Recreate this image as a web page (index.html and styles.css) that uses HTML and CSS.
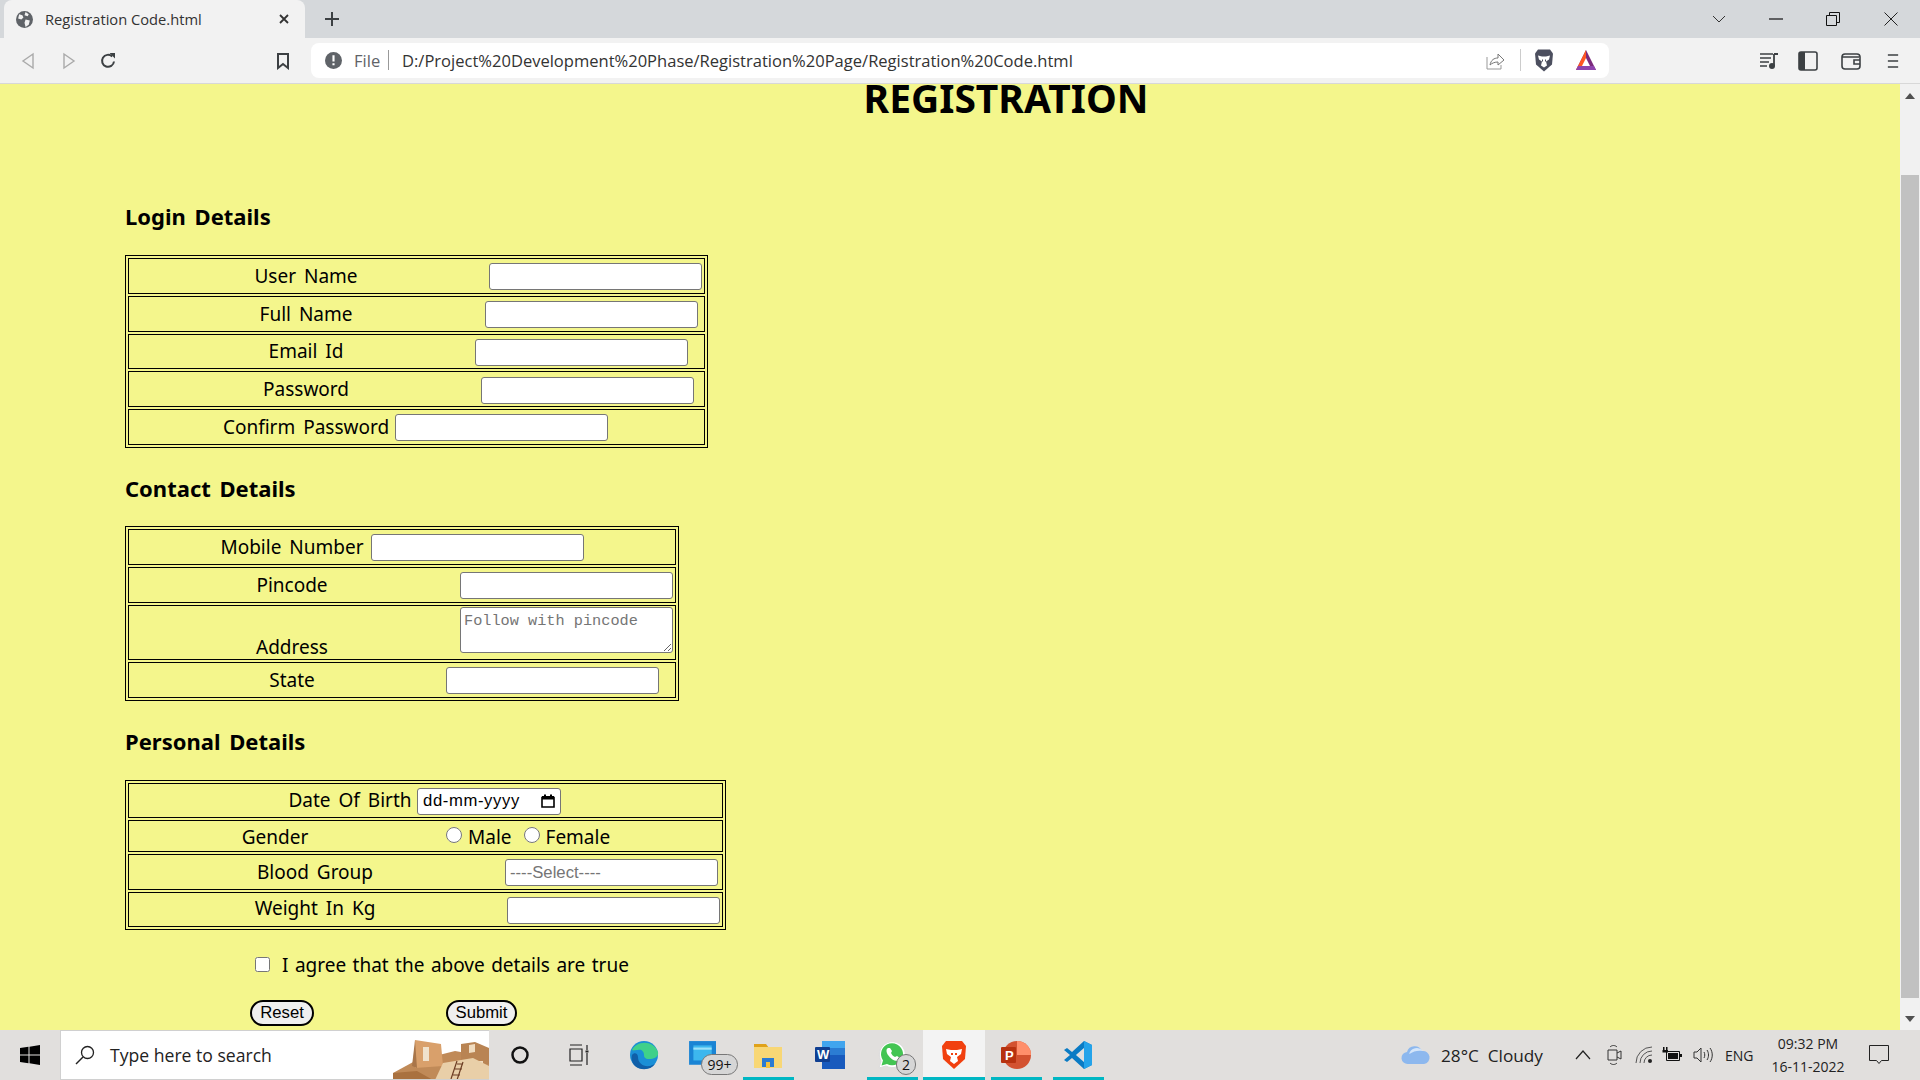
FILE: index.html
```html
<!DOCTYPE html>
<html lang="en">
  <head>
    <meta charset="UTF-8" />
    <title>Registration Code.html</title>
    <link rel="stylesheet" href="styles.css">
  </head>
  <body>
    <div class="tabstrip">
      <div class="tab">
        <svg class="globe" viewBox="0 0 16 16"><circle cx="8" cy="8" r="8" fill="#5f6368"/><path d="M3 3l3 1 1 2-2 2-3-1zM9 1l3 2-1 2-3-1zM9 8l4 1-1 4-3 2-1-4z" fill="#f2f2f2"/></svg>
        <span class="tab-title">Registration Code.html</span>
        <svg class="tab-close" viewBox="0 0 12 12"><path d="M2 2l8 8M10 2l-8 8" stroke="#333" stroke-width="1.8"/></svg>
      </div>
      <svg class="new-tab" viewBox="0 0 16 16"><path d="M8 1v14M1 8h14" stroke="#3c4043" stroke-width="2"/></svg>
      <div class="win-controls">
        <svg class="win-caret" viewBox="0 0 14 8"><path d="M1 1l6 6 6-6" fill="none" stroke="#333"/></svg>
        <svg class="win-min" viewBox="0 0 14 2"><path d="M0 1h14" stroke="#111" stroke-width="1.2"/></svg>
        <svg class="win-max" viewBox="0 0 14 14"><path d="M.5 3.500h10v10H.5zM3.500 3.500v-3h10v10h-3" fill="none" stroke="#111"/></svg>
        <svg class="win-close" viewBox="0 0 14 14"><path d="M.5.500l13 13M13.500.500l-13 13" stroke="#222"/></svg>
      </div>
    </div>

    <div class="toolbar">
      <svg class="nav-back" viewBox="0 0 14 18"><path d="M12 2v14L2 9z" fill="none" stroke="#aaa" stroke-width="1.4"/></svg>
      <svg class="nav-forward" viewBox="0 0 14 18"><path d="M2 2v14l10-7z" fill="none" stroke="#aaa" stroke-width="1.4"/></svg>
      <svg class="nav-reload" viewBox="0 0 18 18"><path d="M15 9.500A6 6 0 1 1 13.200 4.500" fill="none" stroke="#3c4043" stroke-width="2"/><path d="M10.500 1H16v5.500z" fill="#3c4043"/></svg>
      <svg class="nav-bookmark" viewBox="0 0 14 18"><path d="M2 2h10v14l-5-4-5 4z" fill="none" stroke="#3c4043" stroke-width="2"/></svg>
      <div class="address">
        <svg class="info" viewBox="0 0 16 16"><circle cx="8" cy="8" r="8" fill="#5f6368"/><path d="M7 3h2v6H7zM7 10.500h2v2H7z" fill="#fff"/></svg>
        <span class="scheme">File</span>
        <span class="address-sep"></span>
        <span class="url">D:/Project%20Development%20Phase/Registration%20Page/Registration%20Code.html</span>
        <svg class="share" viewBox="0 0 20 20"><path d="M1 7v12h14v-4" fill="none" stroke="#999"/><path d="M4 15c1-5 4-7 8-7V4l6 6-6 5v-3c-3 0-6 1-8 3z" fill="none" stroke="#777"/></svg>
        <span class="address-sep ext-sep"></span>
        <svg class="brave-shield" viewBox="0 0 20 24"><path d="M4 1h12l3 4-1 11-8 7-8-7L1 5z" fill="#4c4f5f"/><path d="M4 7l4 1h4l4-1-1 4-3 2 1 4-3 2-3-2 1-4-3-2z" fill="#fff"/><path d="M8 11h1v2H8zM11 11h1v2h-1z" fill="#4c4f5f"/></svg>
        <svg class="bat" viewBox="0 0 22 22"><path d="M11 1L1 21h20z" fill="#7b2a7d"/><path d="M11 1L1 21h6l4-10z" fill="#ff5722"/><path d="M1 21h20l-2-4H3z" fill="#8e44ad"/><path d="M11 9l-4 8h8z" fill="#fff"/></svg>
      </div>
      <svg class="tool-playlist" viewBox="0 0 20 18"><path d="M1 2h13M1 6h11M1 10h9M1 14h7" stroke="#3c4043" stroke-width="1.600"/><path d="M15 2h4M15 2v12" stroke="#3c4043" stroke-width="1.800"/><circle cx="13" cy="14" r="3" fill="#3c4043"/></svg>
      <svg class="tool-sidebar" viewBox="0 0 20 20"><rect x="1" y="1" width="18" height="18" rx="2" fill="none" stroke="#3c4043" stroke-width="1.600"/><rect x="1" y="1" width="6" height="18" fill="#3c4043"/></svg>
      <svg class="tool-wallet" viewBox="0 0 20 20"><rect x="1" y="3" width="18" height="15" rx="3" fill="none" stroke="#3c4043" stroke-width="1.600"/><path d="M1 6h17M19 9h-6v4h6" fill="none" stroke="#3c4043" stroke-width="1.600"/></svg>
      <svg class="tool-menu" viewBox="0 0 14 18"><path d="M1 2h12M1 9h12M1 16h12" stroke="#3c4043" stroke-width="2"/></svg>
    </div>

    <div class="viewport">
      <main class="page">
        <h1 class="page-title">REGISTRATION</h1>

        <h3 class="group-title login-title">Login Details</h3>
        <div class="group login">
          <div class="row"><label class="name">User Name</label><input class="field f-user" type="text"></div>
          <div class="row"><label class="name">Full Name</label><input class="field f-full" type="text"></div>
          <div class="row"><label class="name">Email Id</label><input class="field f-email" type="text"></div>
          <div class="row"><label class="name">Password</label><input class="field f-pass" type="password"></div>
          <div class="row"><label class="name">Confirm Password</label><input class="field f-confirm" type="password"></div>
        </div>

        <h3 class="group-title contact-title">Contact Details</h3>
        <div class="group contact">
          <div class="row"><label class="name">Mobile Number</label><input class="field f-mobile" type="text"></div>
          <div class="row"><label class="name">Pincode</label><input class="field f-pin" type="text"></div>
          <div class="row row-address"><label class="name">Address</label><textarea class="field f-address" placeholder="Follow with pincode"></textarea></div>
          <div class="row"><label class="name">State</label><input class="field f-state" type="text"></div>
        </div>

        <h3 class="group-title personal-title">Personal Details</h3>
        <div class="group personal">
          <div class="row row-dob">
            <label class="name l-dob">Date Of Birth</label>
            <div class="date-field">
              <span>dd-mm-yyyy</span>
              <svg class="calendar" viewBox="0 0 14 14"><path d="M1 3.500h12v9.500H1z" fill="none" stroke="#000" stroke-width="1.600"/><path d="M1 2h12v3.500H1zM3 .5h2v2H3zM9 .5h2v2H9z" fill="#000"/></svg>
            </div>
          </div>
          <div class="row row-gender">
            <label class="name l-gender">Gender</label>
            <input class="radio r-male" type="radio" name="gender"><span class="radio-text">Male</span>
            <input class="radio r-female" type="radio" name="gender"><span class="radio-text">Female</span>
          </div>
          <div class="row"><label class="name l-blood">Blood Group</label><input class="field f-blood" type="text" placeholder="----Select----"></div>
          <div class="row"><label class="name l-weight">Weight In Kg</label><input class="field f-weight" type="text"></div>
        </div>

        <div class="agree">
          <input class="agree-box" type="checkbox">
          <span>I agree that the above details are true</span>
        </div>

        <div class="actions">
          <button class="btn btn-reset" type="reset">Reset</button>
          <button class="btn btn-submit" type="submit">Submit</button>
        </div>
      </main>

      <div class="scrollbar">
        <span class="arrow-up"></span>
        <div class="thumb"></div>
        <span class="arrow-down"></span>
      </div>
    </div>

    <footer class="taskbar">
      <div class="start">
        <svg viewBox="0 0 20 20"><path d="M0 3l8.500-1.200v7.700H0zM9.500 1.700L20 0v9.500H9.500zM0 10.500h8.500v7.700L0 17zM9.500 10.500H20V20L9.500 18.300z" fill="#000"/></svg>
      </div>
      <div class="search">
        <svg class="search-icon" viewBox="0 0 20 20"><circle cx="12.500" cy="7.500" r="6" fill="none" stroke="#222" stroke-width="1.300"/><path d="M8 12l-7 7" stroke="#222" stroke-width="1.500"/></svg>
        <span class="search-text">Type here to search</span>
        <svg class="search-art" viewBox="0 0 96 45">
          <path d="M0 38l22-12 40-10 34 6v23H0z" fill="#c08a58"/>
          <path d="M22 5l26 4 2 22-28 2z" fill="#d9a06b"/>
          <path d="M22 5l-3 26 5 2z" fill="#a9764a"/>
          <path d="M68 9l14-2 14 6v16H68z" fill="#b98453"/>
          <path d="M30 12h6v14h-6z" fill="#f0e2cc"/>
          <path d="M76 10l6-1v8l-6 1zM84 26h6v12h-6z" fill="#f0dcc0"/>
          <path d="M50 28l30-5 16 8v14H42z" fill="#e9cfa8"/>
          <path d="M0 38l24-2 16 9H0z" fill="#a9713f"/>
          <path d="M58 44l6-18M64 45l6-18M60 40h7M62 34h7M64 29h6" stroke="#6b3b22" stroke-width="1.200"/>
        </svg>
      </div>
      <div class="task-btn">
        <svg class="i-cortana" viewBox="0 0 20 20"><circle cx="10" cy="10" r="7.500" fill="none" stroke="#111" stroke-width="2.500"/></svg>
      </div>
      <div class="task-btn">
        <svg class="i-taskview" viewBox="0 0 20 22"><path d="M1 1h12M1 21h12M1 5h12v12H1zM18 1v5M18 9v12" fill="none" stroke="#222" stroke-width="1.200"/><path d="M16.500 6.500h3v2h-3z" fill="#222"/></svg>
      </div>
      <div class="task-btn">
        <svg class="i-edge" viewBox="0 0 30 30"><circle cx="15" cy="15" r="14" fill="#1a8fd6"/><path d="M3 10C7 1 24-1 29 12c1 5-4 7-9 7-4 0-5-2-5-4 0-4-3-6-6-5-3 0-5 1-6 0z" fill="#3fd08a"/><path d="M9 17c0 6 5 10 12 9l5-2c-4 6-14 7-20 2-3-3-4-7-3-11 2-3 6-2 6 2z" fill="#0f5fa8"/></svg>
      </div>
      <div class="task-btn">
        <svg class="i-store" viewBox="0 0 26 26"><path d="M1 1h25v22H1z" fill="#1a84d4"/><path d="M5 5h17v14H5z" fill="#3db7ee"/><path d="M5 8h17" stroke="#9be2f8" stroke-width="2"/></svg>
        <span class="badge badge-wide">99+</span>
      </div>
      <div class="task-btn task-open">
        <svg class="i-folder" viewBox="0 0 28 26"><path d="M0 2h12l3 4H0z" fill="#e0a21a"/><path d="M0 5h28v21H0z" fill="#f8d775"/><path d="M8 25v-9h12v9h-4v-5h-4v5z" fill="#2a7bd3"/><path d="M12 20h4v6h-4z" fill="#f2c13d"/></svg>
      </div>
      <div class="task-btn">
        <svg class="i-word" viewBox="0 0 30 30"><path d="M7 1h23v28H7z" fill="#185abd"/><path d="M7 1h23v7H7z" fill="#41a5ee"/><path d="M7 8h23v7H7z" fill="#2b7cd3"/><rect x="0" y="7" width="15" height="15" rx="1" fill="#103f91"/><text x="2" y="19" class="word-letter">W</text></svg>
      </div>
      <div class="task-btn task-open">
        <svg class="i-whatsapp" viewBox="0 0 30 30"><path d="M2 28l2-7A13 13 0 1 1 9 26z" fill="#fff" stroke="#ddd"/><path d="M4.500 25.500l1.500-5A11 11 0 1 1 10 24z" fill="#43c553"/><path d="M11 8c-2 1-2 4 0 7s6 6 9 6c2 0 3-2 3-3l-3-2-2 1c-2-1-3-2-4-4l1-2-2-3z" fill="#fff"/></svg>
        <span class="badge">2</span>
      </div>
      <div class="task-btn task-open task-active">
        <svg class="i-brave" viewBox="0 0 26 30"><path d="M5 1h16l4 5-1 13-11 10L2 19 1 6z" fill="#f1400f"/><path d="M5 9l5 1h6l5-1-1 5-4 3 1 4-4 3-4-3 1-4-4-3z" fill="#fff"/><path d="M10 13h2v2h-2zM14 13h2v2h-2z" fill="#f1400f"/></svg>
      </div>
      <div class="task-btn task-open">
        <svg class="i-ppt" viewBox="0 0 30 30"><circle cx="16" cy="15" r="14" fill="#d35230"/><path d="M16 1a14 14 0 0 1 14 14H16z" fill="#ff8f6b"/><rect x="0" y="7" width="15" height="16" rx="1" fill="#b7320f"/><text x="4" y="20" class="ppt-letter">P</text></svg>
      </div>
      <div class="task-btn task-open">
        <svg class="i-code" viewBox="0 0 30 30"><path d="M21 1l8 4v20l-8 4L9 18l-5 4-3-2 6-5-6-5 3-2 5 4z" fill="#0a7bc4"/><path d="M21 1l8 4v20l-8 4zM21 8l-8 7 8 7z" fill="#23a3ea"/><path d="M21 8v14l-8-7z" fill="#e0e0e0"/></svg>
      </div>

      <div class="tray">
        <svg class="i-cloud" viewBox="0 0 30 20"><path d="M7 19a6 6 0 0 1-1-12 8 8 0 0 1 15-1 6.500 6.500 0 0 1 2 13z" fill="#8db8ee"/><path d="M8 9a8 8 0 0 1 14-3c-5-1-9 0-14 3z" fill="#d5e6fa"/></svg>
        <span class="weather">28°C&nbsp; Cloudy</span>
        <svg class="i-chevron" viewBox="0 0 16 10"><path d="M1 9l7-8 7 8" fill="none" stroke="#222" stroke-width="1.200"/></svg>
        <svg class="i-meet" viewBox="0 0 16 22"><path d="M1 6h9v10H1zM10 9l4-2v8l-4-2" fill="none" stroke="#333"/><path d="M3 3c2-2 5-2 7 0M3 19c2 2 5 2 7 0" fill="none" stroke="#333"/></svg>
        <svg class="i-wifi" viewBox="0 0 18 18"><path d="M1 17A16 16 0 0 1 17 1M5 17A12 12 0 0 1 17 5M9 17a8 8 0 0 1 8-8" fill="none" stroke="#555"/><circle cx="15" cy="15" r="2" fill="#222"/></svg>
        <svg class="i-battery" viewBox="0 0 20 16"><path d="M4.500 4.500h13v9h-13z" fill="none" stroke="#111"/><path d="M6 6h10v6H6zM18 7h2v3h-2zM1 0h1.500v4H1zM4 0h1.500v4H4zM.5 3h5.500v2.500H.5z" fill="#111"/></svg>
        <svg class="i-volume" viewBox="0 0 20 18"><path d="M1 6h3l4-4v14l-4-4H1z" fill="none" stroke="#333"/><path d="M11 6c1 2 1 4 0 6M14 4c2 3 2 7 0 10M17 2c3 4 3 10 0 14" fill="none" stroke="#333"/></svg>
        <span class="lang">ENG</span>
        <div class="clock"><span>09:32 PM</span><span>16-11-2022</span></div>
        <svg class="i-notify" viewBox="0 0 20 20"><path d="M.5.500h19v15h-7l-2.500 3-2.500-3h-7z" fill="none" stroke="#222"/></svg>
      </div>
    </footer>
  </body>
</html>
```

FILE: styles.css
```css
* {
  box-sizing: border-box;
}

html,
body {
  margin: 0;
  height: 100%;
}

body {
  width: 1920px;
  height: 1080px;
  overflow: hidden;
  display: flex;
  flex-direction: column;
  font-family: "Noto Sans", sans-serif;
  color: #000;
  background: #f4f68c;
}

svg {
  display: block;
  flex: none;
}

/* browser chrome */
.tabstrip {
  height: 38px;
  flex: none;
  background: #d5d8db;
  display: flex;
  align-items: flex-end;
  padding-left: 4px;
}

.tab {
  width: 301px;
  height: 38px;
  background: #f2f2f2;
  border-radius: 8px 8px 0 0;
  display: flex;
  align-items: center;
  padding-left: 12px;
  font-family: "Open Sans", sans-serif;
  font-size: 14.700px;
  color: #333;
}

.globe {
  width: 17px;
  height: 17px;
}

.tab-title {
  margin-left: 12px;
  width: 229px;
  white-space: nowrap;
}

.tab-close {
  width: 12px;
  height: 12px;
  margin-left: 4px;
}

.new-tab {
  width: 16px;
  height: 16px;
  margin: 0 0 11px 19px;
}

.win-controls {
  margin-left: auto;
  display: flex;
  align-items: center;
  height: 38px;
}

.win-caret {
  width: 14px;
  height: 8px;
  margin-right: 43px;
}

.win-min {
  width: 14px;
  height: 2px;
  margin-right: 43px;
}

.win-max {
  width: 14px;
  height: 14px;
  margin-right: 44px;
}

.win-close {
  width: 14px;
  height: 14px;
  margin-right: 22px;
}

.toolbar {
  height: 46px;
  flex: none;
  background: #f2f2f2;
  border-bottom: 1px solid #d8d8d8;
  display: flex;
  align-items: center;
  padding-left: 21px;
}

.nav-back,
.nav-forward {
  width: 14px;
  height: 18px;
}

.nav-forward {
  margin-left: 27px;
}

.nav-reload {
  width: 18px;
  height: 18px;
  margin-left: 23px;
}

.nav-bookmark {
  width: 14px;
  height: 18px;
  margin-left: 159px;
}

.address {
  width: 1298px;
  height: 35px;
  margin: -1px 0 0 21px;
  background: #fff;
  border-radius: 8px;
  display: flex;
  align-items: center;
  padding-left: 14px;
  font-family: "Open Sans", sans-serif;
  font-size: 16.550px;
  color: #444;
}

.info {
  width: 17px;
  height: 17px;
}

.scheme {
  margin-left: 12px;
  width: 34px;
  color: #5f6368;
}

.address-sep {
  width: 1px;
  height: 20px;
  background: #999;
}

.url {
  margin-left: 13px;
  width: 1081px;
  white-space: nowrap;
  color: #333;
}

.share {
  width: 20px;
  height: 20px;
  margin-left: 3px;
}

.ext-sep {
  margin-left: 14px;
  height: 22px;
  background: #ccc;
}

.brave-shield {
  width: 20px;
  height: 25px;
  margin-left: 13px;
}

.bat {
  width: 22px;
  height: 22px;
  margin-left: 21px;
}

.tool-playlist {
  width: 20px;
  height: 18px;
  margin-left: 150px;
}

.tool-sidebar {
  width: 20px;
  height: 20px;
  margin-left: 19px;
}

.tool-wallet {
  width: 20px;
  height: 20px;
  margin-left: 23px;
}

.tool-menu {
  width: 12px;
  height: 18px;
  margin-left: 26px;
}

/* page */
.viewport {
  flex: 1;
  min-height: 0;
  display: flex;
}

.page {
  flex: 1;
  padding-left: 125px;
}

.page-title {
  margin: 0;
  padding-right: 13px;
  font-size: 39px;
  line-height: 28px;
  text-align: center;
  font-weight: 700;
}

.group-title {
  margin: 0;
  font-size: 22px;
  line-height: 30px;
  font-weight: 700;
  word-spacing: 3px;
}

.login-title {
  margin-top: 89px;
}

.contact-title {
  margin-top: 25px;
}

.personal-title {
  margin-top: 25px;
}

.group {
  border: 1px solid #000;
  padding: 2px;
  display: flex;
  flex-direction: column;
  gap: 2px;
  margin-top: 23px;
  font-size: 19px;
  word-spacing: 3px;
}

.login {
  width: 583px;
  margin-top: 24px;
}

.contact {
  width: 554px;
}

.personal {
  width: 601px;
  margin-top: 24px;
}

.row {
  height: 35.750px;
  border: 1px solid #000;
  display: flex;
  align-items: center;
}

.contact .row {
  height: 36px;
}

.name {
  flex: none;
  text-align: center;
  white-space: nowrap;
}

.login .name {
  width: 170px;
  margin-left: 92px;
}

.contact .name {
  width: 150px;
  margin-left: 88px;
}

.field {
  flex: none;
  width: 213px;
  height: 27px;
  padding: 1px 4px;
  margin-top: 2px;
  border: 1px solid #767676;
  border-radius: 3px;
  background: #fff;
  font-family: "Liberation Sans", sans-serif;
  font-size: 16.700px;
}

.field::placeholder {
  color: #757575;
}

/* inputs don't share a column in this form, each one sits on its own */
.f-user {
  margin-left: 98px;
}

.f-full {
  margin-left: 94px;
}

.f-email {
  margin-left: 84px;
}

.f-pass {
  margin-left: 90px;
}

.f-confirm {
  margin-left: 4px;
}

.f-mobile {
  margin-left: 4px;
}

.f-pin {
  margin-left: 93px;
}

.f-state {
  margin-left: 79px;
}

.contact .row-address {
  height: 55px;
  align-items: flex-end;
}

.row-address .name {
  line-height: 24px;
}

.f-address {
  height: 46px;
  margin: 0 0 6px 93px;
  padding: 4px 3px;
  font-family: "Liberation Mono", monospace;
  font-size: 15.250px;
}

.row-dob {
  height: 35px;
}

.row-gender {
  height: 32px;
}

.l-dob {
  width: 130px;
  margin-left: 156px;
}

.date-field {
  width: 144px;
  height: 27px;
  margin: 2px 0 0 2px;
  border: 1px solid #767676;
  border-radius: 3px;
  background: #fff;
  display: flex;
  align-items: center;
  justify-content: space-between;
  padding: 0 5px 0 5px;
  font-family: "Liberation Sans", sans-serif;
  font-size: 16.700px;
  letter-spacing: 0.600px;
  word-spacing: 0;
}

.calendar {
  width: 14px;
  height: 14px;
}

.l-gender {
  width: 100px;
  margin-left: 96px;
  margin-top: 2px;
}

.radio {
  flex: none;
  width: 16px;
  height: 16px;
  margin: 0 0 2px;
}

.r-male {
  margin-left: 121px;
}

.r-female {
  margin-left: 0;
}

.radio-text {
  margin-left: 6px;
  margin-right: 12px;
  margin-top: 2px;
}

.l-blood,
.l-weight {
  width: 130px;
  margin-left: 121px;
}

.l-weight {
  margin-bottom: 3px;
}

.f-blood {
  margin-left: 125px;
}

.f-weight {
  margin-left: 127px;
}

.agree {
  margin: 20px 0 0 130px;
  height: 30px;
  display: flex;
  align-items: center;
  font-size: 19px;
  word-spacing: 1.500px;
}

.agree-box {
  width: 15px;
  height: 15px;
  margin: 0 12px 2px 0;
}

.actions {
  margin: 20px 0 0 125px;
  display: flex;
}

.btn {
  height: 26px;
  padding: 0;
  border: 2px solid #000;
  border-radius: 13px;
  background: #efefef;
  font-family: "Liberation Sans", sans-serif;
  font-size: 16.700px;
  line-height: 20px;
  color: #000;
}

.btn-reset {
  width: 64px;
}

.btn-submit {
  width: 71px;
  margin-left: 132px;
}

.scrollbar {
  width: 20px;
  flex: none;
  background: #f1f1f1;
  position: relative;
}

.thumb {
  position: absolute;
  top: 91px;
  left: 1px;
  width: 18px;
  height: 823px;
  background: #c1c1c1;
}

.arrow-up,
.arrow-down {
  position: absolute;
  left: 5px;
  width: 0;
  height: 0;
  border-left: 5px solid transparent;
  border-right: 5px solid transparent;
}

.arrow-up {
  top: 9px;
  border-bottom: 6px solid #505050;
}

.arrow-down {
  bottom: 8px;
  border-top: 6px solid #505050;
}

/* windows taskbar */
.taskbar {
  height: 50px;
  flex: none;
  background: #e1dfdd;
  display: flex;
  font-family: "Open Sans", sans-serif;
  color: #222;
}

.start {
  width: 60px;
  display: flex;
  align-items: center;
  justify-content: center;
}

.start svg {
  width: 20px;
  height: 20px;
}

.search {
  width: 429px;
  background: #fff;
  border: 1px solid #d0d0d0;
  border-width: 1px 0 1px 1px;
  display: flex;
  align-items: center;
  overflow: hidden;
  font-size: 17.600px;
}

.search-icon {
  width: 20px;
  height: 20px;
  margin-left: 14px;
}

.search-text {
  margin-left: 15px;
  width: 284px;
  white-space: nowrap;
}

.search-art {
  width: 96px;
  height: 45px;
  margin-top: 5px;
}

.task-btn {
  width: 62px;
  height: 50px;
  position: relative;
  display: flex;
  align-items: center;
  justify-content: center;
}

.task-open::after {
  content: "";
  position: absolute;
  left: 6px;
  right: 5px;
  bottom: 0;
  height: 3px;
  background: #00b7c3;
}

.task-active {
  background: #f3f3f3;
}

.task-active::after {
  left: 0;
  right: 0;
}

.i-cortana {
  width: 20px;
  height: 20px;
}

.i-taskview {
  width: 20px;
  height: 22px;
  margin-right: 6px;
}

.i-edge,
.i-word,
.i-whatsapp,
.i-ppt,
.i-code {
  width: 30px;
  height: 30px;
}

.i-store {
  width: 28px;
  height: 28px;
  margin: -3px 8px 0 0;
}

.i-folder {
  width: 28px;
  height: 26px;
}

.i-brave {
  width: 26px;
  height: 30px;
}

.word-letter,
.ppt-letter {
  font-family: "Liberation Sans", sans-serif;
  font-size: 13px;
  font-weight: 700;
  fill: #fff;
}

.badge {
  position: absolute;
  top: 24px;
  left: 35px;
  min-width: 20px;
  height: 21px;
  padding: 0 4px;
  border: 1px solid #777;
  border-radius: 11px;
  background: #d6d6d6;
  font-size: 14px;
  line-height: 19px;
  text-align: center;
  color: #111;
}

.badge-wide {
  left: 26px;
  width: 37px;
  padding: 0;
}

.tray {
  margin-left: auto;
  display: flex;
  align-items: center;
  padding-right: 31px;
  font-size: 17.200px;
}

.i-cloud {
  width: 30px;
  height: 20px;
}

.weather {
  margin-left: 10px;
  width: 123px;
  white-space: nowrap;
}

.i-chevron {
  width: 16px;
  height: 10px;
  margin: 0 0 0 11px;
}

.i-meet {
  width: 16px;
  height: 22px;
  margin-left: 16px;
}

.i-wifi {
  width: 18px;
  height: 18px;
  margin-left: 12px;
}

.i-battery {
  width: 20px;
  height: 16px;
  margin-left: 9px;
}

.i-volume {
  width: 20px;
  height: 18px;
  margin-left: 11px;
}

.lang {
  margin-left: 12px;
  width: 33px;
  font-size: 14px;
}

.clock {
  width: 100px;
  display: flex;
  flex-direction: column;
  align-items: center;
  gap: 4px;
  font-size: 14px;
  line-height: 19px;
}

.i-notify {
  width: 20px;
  height: 20px;
  margin-left: 11px;
}
```
